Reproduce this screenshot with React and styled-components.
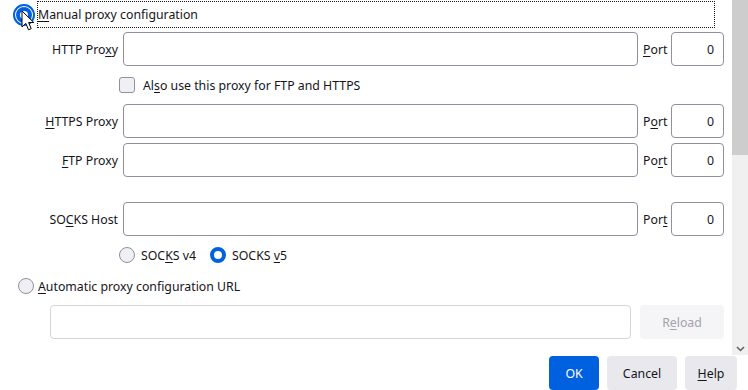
import React from "react";
import styled, { createGlobalStyle } from "styled-components";

const GlobalStyle = createGlobalStyle`
  html, body {
    margin: 0;
    padding: 0;
    background: #ffffff;
  }
  * {
    box-sizing: border-box;
  }
`;

const Dialog = styled.div`
  width: 748px;
  height: 390px;
  overflow: hidden;
  display: flex;
  flex-direction: column;
  font: 12.3px "Noto Sans", "Open Sans", sans-serif;
  color: #15141a;
  background: #ffffff;
`;

const ScrollArea = styled.div`
  height: 355px;
  display: flex;
`;

const Content = styled.div`
  flex: 1;
  display: flex;
  flex-direction: column;
  padding-right: 8px;
`;

const Scrollbar = styled.div`
  width: 16px;
  display: flex;
  flex-direction: column;
  background: #f0f0f0;
`;

const Thumb = styled.div`
  height: 155px;
  background: #cdcdcd;
`;

const Track = styled.div`
  flex: 1;
  display: flex;
  align-items: flex-end;
  justify-content: center;
  padding-bottom: 3px;
`;

const Key = styled.u`
  text-decoration-thickness: 1px;
  text-underline-offset: 2px;
`;

const FocusRow = styled.div`
  position: relative;
  height: 28px;
  display: flex;
  align-items: center;
  padding-left: 13px;
`;

const FocusLabel = styled.span`
  flex: 1;
  margin-right: 9px;
  margin-left: 2px;
  height: 27px;
  display: flex;
  align-items: center;
  border: 1px dotted #15141a;
`;

const FocusRadio = styled.span`
  width: 22px;
  height: 22px;
  border-radius: 50%;
  border: 2px solid #0061e0;
  display: flex;
  align-items: center;
  justify-content: center;
  flex-shrink: 0;
  margin-top: 1px;
`;

const Radio = styled.span`
  width: ${(p) => p.$size || 16}px;
  height: ${(p) => p.$size || 16}px;
  border-radius: 50%;
  flex-shrink: 0;
  border: ${(p) => (p.$checked ? "4px solid #0061e0" : "1px solid #8f8f9d")};
  background: ${(p) => (p.$checked ? "#ffffff" : "#f0f0f4")};
`;

const Cursor = styled.svg`
  position: absolute;
  left: 21px;
  top: 10px;
`;

const Row = styled.div`
  display: grid;
  grid-template-columns: 118px 515px 23px 53px;
  column-gap: 5px;
  align-items: center;
  margin-top: ${(p) => p.$top || 0}px;
`;

const Label = styled.span`
  text-align: right;
  white-space: nowrap;
`;

const PortLabel = styled.span`
  white-space: nowrap;
`;

const Input = styled.div`
  height: 34px;
  border: 1px solid ${(p) => (p.$disabled ? "#d4d4da" : "#8f8f9d")};
  border-radius: 4px;
  background: #ffffff;
  display: flex;
  align-items: center;
  justify-content: flex-end;
  padding-right: 9px;
`;

const CheckRow = styled.div`
  display: flex;
  align-items: center;
  gap: 8px;
  padding-left: 119px;
  margin-top: 10px;
  height: 18px;
`;

const Checkbox = styled.span`
  width: 16px;
  height: 16px;
  border: 1px solid #8f8f9d;
  border-radius: 3px;
  background: #f0f0f4;
`;

const RadioGroup = styled.div`
  display: flex;
  align-items: center;
  padding-left: 119px;
  margin-top: 10px;
  height: 18px;
`;

const RadioOption = styled.label`
  display: flex;
  align-items: center;
  gap: 6px;
  margin-right: 14px;
`;

const AutoRow = styled.div`
  display: flex;
  align-items: center;
  gap: 4px;
  padding-left: 18px;
  margin-top: 13px;
  height: 18px;
`;

const UrlRow = styled.div`
  display: flex;
  gap: 9px;
  padding-left: 50px;
  margin-top: 10px;
`;

const UrlInput = styled(Input)`
  width: 581px;
`;

const Button = styled.button`
  height: 34px;
  border: none;
  border-radius: 4px;
  font: inherit;
  padding: 0;
  width: ${(p) => p.$w}px;
  background: ${(p) => (p.$primary ? "#0061e0" : p.$disabled ? "#f5f5f7" : "#e9e9ed")};
  color: ${(p) => (p.$primary ? "#ffffff" : p.$disabled ? "#a3a3ab" : "#15141a")};
`;

const Footer = styled.div`
  display: flex;
  justify-content: flex-end;
  gap: 8px;
  padding: 1px 11px 0 0;
`;

export default function App() {
  return (
    <Dialog>
      <GlobalStyle />
      <ScrollArea>
        <Content>
          <FocusRow>
            <FocusRadio>
              <Radio $checked $size={16} />
            </FocusRadio>
            <FocusLabel>
              <span>
                <Key>M</Key>anual proxy configuration
              </span>
            </FocusLabel>
            <Cursor width="14" height="22" viewBox="0 0 14 22">
              <path
                d="M1 1 L1 17 L4.8 13.4 L7.5 19.8 L10.2 18.7 L7.6 12.5 L12.8 12.5 Z"
                fill="#ffffff"
                stroke="#000000"
                strokeWidth="1"
                strokeLinejoin="round"
              />
            </Cursor>
          </FocusRow>

          <Row $top={4}>
            <Label>
              HTTP Pro<Key>x</Key>y
            </Label>
            <Input />
            <PortLabel>
              <Key>P</Key>ort
            </PortLabel>
            <Input>0</Input>
          </Row>

          <CheckRow>
            <Checkbox />
            <span>
              Al<Key>s</Key>o use this proxy for FTP and HTTPS
            </span>
          </CheckRow>

          <Row $top={10}>
            <Label>
              <Key>H</Key>TTPS Proxy
            </Label>
            <Input />
            <PortLabel>
              P<Key>o</Key>rt
            </PortLabel>
            <Input>0</Input>
          </Row>

          <Row $top={5}>
            <Label>
              <Key>F</Key>TP Proxy
            </Label>
            <Input />
            <PortLabel>
              Po<Key>r</Key>t
            </PortLabel>
            <Input>0</Input>
          </Row>

          <Row $top={25}>
            <Label>
              SO<Key>C</Key>KS Host
            </Label>
            <Input />
            <PortLabel>
              Por<Key>t</Key>
            </PortLabel>
            <Input>0</Input>
          </Row>

          <RadioGroup>
            <RadioOption>
              <Radio />
              <span>
                SOC<Key>K</Key>S v4
              </span>
            </RadioOption>
            <RadioOption>
              <Radio $checked />
              <span>
                SOCKS <Key>v</Key>5
              </span>
            </RadioOption>
          </RadioGroup>

          <AutoRow>
            <Radio />
            <span>
              <Key>A</Key>utomatic proxy configuration URL
            </span>
          </AutoRow>

          <UrlRow>
            <UrlInput $disabled />
            <Button $disabled $w={84}>
              R<Key>e</Key>load
            </Button>
          </UrlRow>
        </Content>
        <Scrollbar>
          <Thumb />
          <Track>
            <svg width="9" height="6" viewBox="0 0 9 6">
              <path d="M1 1 L4.5 4.5 L8 1" fill="none" stroke="#606060" strokeWidth="1.5" />
            </svg>
          </Track>
        </Scrollbar>
      </ScrollArea>
      <Footer>
        <Button $primary $w={50}>
          OK
        </Button>
        <Button $w={70}>Cancel</Button>
        <Button $w={52}>
          <Key>H</Key>elp
        </Button>
      </Footer>
    </Dialog>
  );
}
